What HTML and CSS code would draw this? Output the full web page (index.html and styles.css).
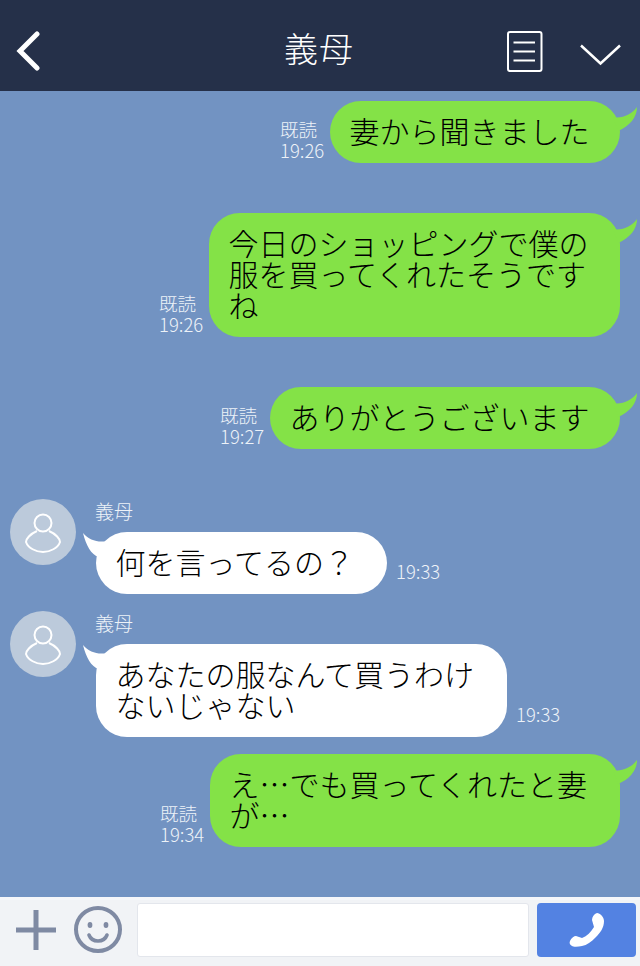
FILE: index.html
```html
<!DOCTYPE html>
<html lang="ja">
<head>
<meta charset="utf-8">
<title>義母</title>
<link rel="stylesheet" href="styles.css">
</head>
<body>
<div class="app">
  <header class="topbar">
    <svg class="ico-back" width="24" height="40" viewBox="0 0 24 40"><path d="M21 3 L4 20 L21 37" fill="none" stroke="#fff" stroke-width="5" stroke-linecap="round" stroke-linejoin="miter"/></svg>
    <h1 class="title">義母</h1>
    <svg class="ico-note" width="36" height="41" viewBox="0 0 36 41"><rect x="1" y="1" width="33.500" height="39" rx="2" fill="none" stroke="#fff" stroke-width="2"/><path d="M6.500 11.500H28M6.500 20.500H28M6.500 29.500H28" stroke="#fff" stroke-width="2"/></svg>
    <svg class="ico-down" width="42" height="22" viewBox="0 0 42 22"><path d="M2 1.500 L21.500 19.500 L41 1.500" fill="none" stroke="#fff" stroke-width="2.500"/></svg>
  </header>
  <main class="chat">
    <div class="row me">
      <div class="meta"><span>既読</span><span>19:26</span></div>
      <div class="bubble green w290">妻から聞きました<svg class="tail-r" width="28" height="26" viewBox="0 0 28 26"><path d="M3 10 C12 12 22 7 27 0 C27 10 20 19 8 24 Z" fill="#84e247"/></svg></div>
    </div>
    <div class="row me gap50">
      <div class="meta"><span>既読</span><span>19:26</span></div>
      <div class="bubble green w411">今日のショッピングで僕の服を買ってくれたそうですね<svg class="tail-r" width="28" height="26" viewBox="0 0 28 26"><path d="M3 10 C12 12 22 7 27 0 C27 10 20 19 8 24 Z" fill="#84e247"/></svg></div>
    </div>
    <div class="row me gap50">
      <div class="meta"><span>既読</span><span>19:27</span></div>
      <div class="bubble green w350">ありがとうございます<svg class="tail-r" width="28" height="26" viewBox="0 0 28 26"><path d="M3 10 C12 12 22 7 27 0 C27 10 20 19 8 24 Z" fill="#84e247"/></svg></div>
    </div>
    <div class="row you gap50">
      <div class="avatar"><svg width="66" height="66" viewBox="0 0 66 66"><circle cx="33" cy="24" r="8.500" fill="none" stroke="#fff" stroke-width="2"/><path d="M27 32 C20 35 16 40 16 43 C18 49 26 53 33 53 C40 53 48 49 50 43 C50 40 46 35 39 32" fill="none" stroke="#fff" stroke-width="2"/></svg></div>
      <div class="col">
        <div class="name">義母</div>
        <div class="line">
          <div class="bubble white w291">何を言ってるの？<svg class="tail-l" width="26" height="24" viewBox="0 0 26 24"><path d="M0 0 C6 7 15 10 24 8 L16 24 C8 22 3 12 0 0 Z" fill="#fff"/></svg></div>
          <span class="time">19:33</span>
        </div>
      </div>
    </div>
    <div class="row you gap17">
      <div class="avatar"><svg width="66" height="66" viewBox="0 0 66 66"><circle cx="33" cy="24" r="8.500" fill="none" stroke="#fff" stroke-width="2"/><path d="M27 32 C20 35 16 40 16 43 C18 49 26 53 33 53 C40 53 48 49 50 43 C50 40 46 35 39 32" fill="none" stroke="#fff" stroke-width="2"/></svg></div>
      <div class="col">
        <div class="name">義母</div>
        <div class="line">
          <div class="bubble white w411">あなたの服なんて買うわけないじゃない<svg class="tail-l" width="26" height="24" viewBox="0 0 26 24"><path d="M0 0 C6 7 15 10 24 8 L16 24 C8 22 3 12 0 0 Z" fill="#fff"/></svg></div>
          <span class="time">19:33</span>
        </div>
      </div>
    </div>
    <div class="row me gap17">
      <div class="meta"><span>既読</span><span>19:34</span></div>
      <div class="bubble green w410">え…でも買ってくれたと妻が…<svg class="tail-r" width="28" height="26" viewBox="0 0 28 26"><path d="M3 10 C12 12 22 7 27 0 C27 10 20 19 8 24 Z" fill="#84e247"/></svg></div>
    </div>
  </main>
  <footer class="inputbar">
    <svg class="ico-plus" width="42" height="40" viewBox="0 0 42 40"><path d="M21 0V40M1 20H41" stroke="#7f8aa3" stroke-width="5"/></svg>
    <svg class="ico-smile" width="48" height="48" viewBox="0 0 48 48"><ellipse cx="24" cy="23.500" rx="22" ry="21.500" fill="none" stroke="#7f8aa3" stroke-width="4"/><ellipse cx="16" cy="19" rx="2.400" ry="3" fill="#7f8aa3"/><ellipse cx="32" cy="19" rx="2.400" ry="3" fill="#7f8aa3"/><path d="M15 29 C18 37 30 37 33 29" fill="none" stroke="#7f8aa3" stroke-width="3.600" stroke-linecap="round"/></svg>
    <div class="field"></div>
    <button class="call"><svg width="36" height="36" viewBox="0 0 36 36"><path d="M28 1 C31 1 35 5 35 9 C35 16 31 21 27 25 C22 30 18 33 13 34 C9 35 4 35 3 34 C1 33 0 31 1 29 C2 26 5 24 7 24 L13 26 C18 24 22 20 25 15 L23 8 C23 5 25 2 28 1 Z" fill="#fff"/></svg></button>
  </footer>
</div>
</body>
</html>
```
FILE: styles.css
```css
* { box-sizing: border-box; }
html, body { margin: 0; padding: 0; }
body {
  font-family: "Noto Sans CJK JP", "Noto Sans", sans-serif;
  font-weight: 300;
}
.app {
  width: 640px;
  height: 966px;
  display: flex;
  flex-direction: column;
  overflow: hidden;
  background: #7293c2;
}
.topbar {
  height: 91px;
  flex: none;
  background: #253049;
  display: flex;
  align-items: center;
  padding: 12px 19px 0 16px;
}
.ico-back { flex: none; margin-bottom: 1px; }
.title {
  flex: 1;
  margin: 0 0 8px;
  padding-left: 91px;
  text-align: center;
  color: #fff;
  font-size: 34px;
  font-weight: 300;
  letter-spacing: 1px;
  line-height: 46px;
}
.ico-note { flex: none; margin: 0 36px 0 0; }
.ico-down { flex: none; margin-top: 6px; }
.chat {
  flex: 1;
  padding: 10px 20px 0 10px;
}
.row { display: flex; }
.me { justify-content: flex-end; align-items: flex-end; gap: 5px; }
.you { gap: 20px; align-items: flex-start; }
.gap50 { margin-top: 50px; }
.gap17 { margin-top: 17px; }
.meta {
  display: flex;
  flex-direction: column;
  width: 45px;
  font-size: 18.500px;
  line-height: 21px;
  white-space: nowrap;
  color: #edf2f8;
  padding-bottom: 2px;
  box-sizing: content-box;
}
.bubble {
  position: relative;
  border-radius: 31px;
  padding: 14px 20px 17px 19.500px;
  font-size: 30px;
  line-height: 31px;
  color: #000;
}
.green { background: #84e247; }
.white { background: #fff; }
.w290 { width: 290px; }
.w291 { width: 291px; }
.w350 { width: 350px; }
.w410 { width: 410px; }
.w411 { width: 411px; }
.tail-r { position: absolute; right: -18px; top: 6px; }
.tail-l { position: absolute; left: -13px; top: 1px; }
.avatar {
  width: 66px;
  height: 66px;
  flex: none;
  border-radius: 50%;
  background: #bccadb;
}
.avatar svg { display: block; }
.col { display: flex; flex-direction: column; }
.name {
  height: 33px;
  margin-left: -1px;
  font-size: 19px;
  line-height: 23px;
  color: #edf2f8;
}
.line { display: flex; align-items: flex-end; gap: 9px; }
.time {
  font-size: 18.500px;
  line-height: 21px;
  color: #edf2f8;
  padding-bottom: 12px;
  box-sizing: content-box;
}
.inputbar {
  height: 69px;
  flex: none;
  display: flex;
  align-items: center;
  background: #f1f3f6;
  border-top: 3px solid #f6f7fa;
  padding: 0 4px 6px 15px;
}
.ico-plus { flex: none; margin-right: 17px; }
.ico-smile { flex: none; margin-right: 15px; }
.field {
  width: 392px;
  height: 54px;
  background: #fff;
  border: 1px solid #e3e6ec;
  border-radius: 3px;
  margin-right: 8px;
}
.call {
  width: 99px;
  height: 54px;
  padding: 0;
  border: 0;
  border-radius: 4px;
  background: #5382e2;
  display: flex;
  align-items: center;
  justify-content: center;
}
```
